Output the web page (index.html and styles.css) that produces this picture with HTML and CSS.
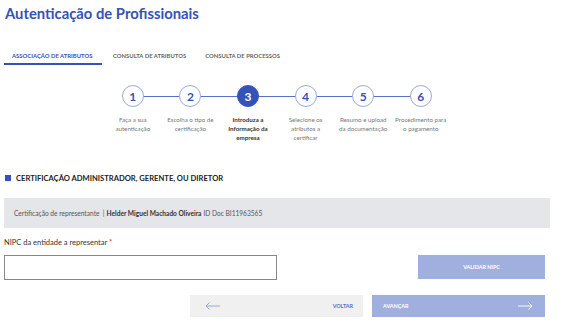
FILE: index.html
```html
<!DOCTYPE html>
<html lang="pt">
<head>
    <meta charset="UTF-8">
    <meta name="viewport" content="width=device-width, initial-scale=1.0">
    <title>Autenticação de Profissionais</title>
    <link rel="stylesheet" href="styles.css">
</head>
<body>
    <h1 class="page-title">Autenticação de Profissionais</h1>

    <nav class="tabs">
        <a class="tab active">Associação de atributos</a>
        <a class="tab">Consulta de atributos</a>
        <a class="tab">Consulta de processos</a>
    </nav>

    <ol class="stepper">
        <li class="step done">
            <span class="circle">1</span>
            <span class="label">Faça a sua autenticação</span>
        </li>
        <li class="step done">
            <span class="circle">2</span>
            <span class="label">Escolha o tipo de certificação</span>
        </li>
        <li class="step current">
            <span class="circle">3</span>
            <span class="label">Introduza a Informação da empresa</span>
        </li>
        <li class="step">
            <span class="circle">4</span>
            <span class="label">Selecione os atributos a certificar</span>
        </li>
        <li class="step">
            <span class="circle">5</span>
            <span class="label">Resumo e upload da documentação</span>
        </li>
        <li class="step">
            <span class="circle">6</span>
            <span class="label">Procedimento para o pagamento</span>
        </li>
    </ol>

    <h2 class="section-title">Certificação administrador, gerente, ou diretor</h2>

    <div class="info-box">
        Certificação de representante &nbsp;| <strong>Helder Miguel Machado Oliveira</strong> ID Doc BI11963565
    </div>

    <form class="nipc-form">
        <label for="nipc" class="field-label">NIPC da entidade a representar <span class="req">*</span></label>
        <div class="field-row">
            <input type="text" id="nipc" class="field-input">
            <button type="button" class="btn btn-primary btn-validate" disabled>Validar NIPC</button>
        </div>
        <div class="nav-row">
            <button type="button" class="btn btn-back">
                <svg width="16" height="8" viewBox="0 0 16 8"><path d="M15 4H1M4.5 0.5L1 4l3.5 3.5" fill="none" stroke="#8fa0d8" stroke-width="0.9"/></svg>
                <span>Voltar</span>
            </button>
            <button type="button" class="btn btn-primary btn-next" disabled>
                <span>Avançar</span>
                <svg width="16" height="8" viewBox="0 0 16 8"><path d="M1 4h14M11.5 0.5L15 4l-3.5 3.5" fill="none" stroke="#ffffff" stroke-width="0.9"/></svg>
            </button>
        </div>
    </form>
</body>
</html>
```

FILE: styles.css
```css
body {
    font-family: Lato, "Open Sans", Arial, sans-serif;
    background-color: #fff;
    color: #333;
    margin: 0;
    padding: 0 0 0 4px;
    width: 546px;
}

.page-title {
    color: #3552b8;
    font-size: 14.8px;
    line-height: 22px;
    font-weight: 700;
    margin: 2px 0 0 1px;
}

.tabs {
    display: flex;
    margin-top: 23px;
    height: 18px;
}

.tab {
    font-size: 5.9px;
    font-weight: 700;
    text-transform: uppercase;
    color: #666;
    padding: 5px 8px 0;
    border-bottom: 2px solid transparent;
}

.tab.active {
    color: #3552b8;
    width: 82px;
    border-bottom-color: #3552b8;
}

.tab + .tab {
    padding-left: 11px;
}

.stepper {
    list-style: none;
    display: flex;
    margin: 20px 0 0 100px;
    padding: 0;
}

.step {
    width: 57.6px;
    display: flex;
    flex-direction: column;
    align-items: center;
    position: relative;
}

.step::before,
.step::after {
    content: "";
    position: absolute;
    top: 11px;
    height: 1px;
    width: 50%;
    background-color: #5a70c8;
}

.step::before {
    left: 0;
}

.step::after {
    right: 0;
}

.step:first-child::before,
.step:last-child::after {
    display: none;
}

.circle {
    position: relative;
    z-index: 1;
    width: 20px;
    height: 20px;
    border: 1px solid #9aa9de;
    border-radius: 50%;
    background-color: #fff;
    color: #3552b8;
    font-size: 12px;
    font-weight: 700;
    display: flex;
    align-items: center;
    justify-content: center;
}

.step.current .circle {
    background-color: #3552b8;
    border-color: #3552b8;
    color: #fff;
}

.label {
    margin-top: 8px;
    width: 52px;
    font-size: 6.2px;
    line-height: 9px;
    text-align: center;
    color: #777;
}

.step.current .label {
    color: #333;
    font-weight: 700;
}

.section-title {
    display: flex;
    align-items: center;
    font-size: 7.6px;
    font-weight: 700;
    text-transform: uppercase;
    color: #222;
    margin: 31px 0 0 1px;
}

.section-title::before {
    content: "";
    width: 6px;
    height: 6px;
    background-color: #3552b8;
    margin-right: 5px;
}

.info-box {
    margin-top: 15px;
    height: 30px;
    display: flex;
    align-items: center;
    background-color: #e4e6e9;
    padding-left: 10px;
    font-size: 6.6px;
    color: #555;
}

.info-box strong {
    color: #333;
    margin: 0 2px;
}

.field-label {
    display: block;
    margin-top: 10px;
    font-size: 7.5px;
    color: #333;
}

.req {
    color: #d33;
}

.field-row {
    display: flex;
    justify-content: space-between;
    margin-top: 8px;
    padding-right: 5px;
}

.field-input {
    width: 273px;
    height: 25px;
    box-sizing: border-box;
    border: 1px solid #888;
    margin: 0;
}

.btn {
    font-family: Lato, Arial, sans-serif;
    font-size: 5.4px;
    font-weight: 700;
    text-transform: uppercase;
    border: none;
    margin: 0;
    display: flex;
    align-items: center;
    box-sizing: border-box;
}

.btn-primary {
    background-color: #9fb0de;
    color: #fff;
}

.btn-validate {
    width: 127px;
    height: 24px;
    justify-content: center;
}

.nav-row {
    display: flex;
    justify-content: flex-end;
    gap: 9px;
    margin-top: 15px;
    padding-right: 5px;
}

.btn-back {
    width: 173px;
    height: 22px;
    background-color: #f0f0f0;
    color: #5a70c8;
    justify-content: space-between;
    padding: 0 10px 0 15px;
}

.btn-next {
    width: 173px;
    height: 22px;
    justify-content: space-between;
    padding: 0 12px 0 11px;
}
```
